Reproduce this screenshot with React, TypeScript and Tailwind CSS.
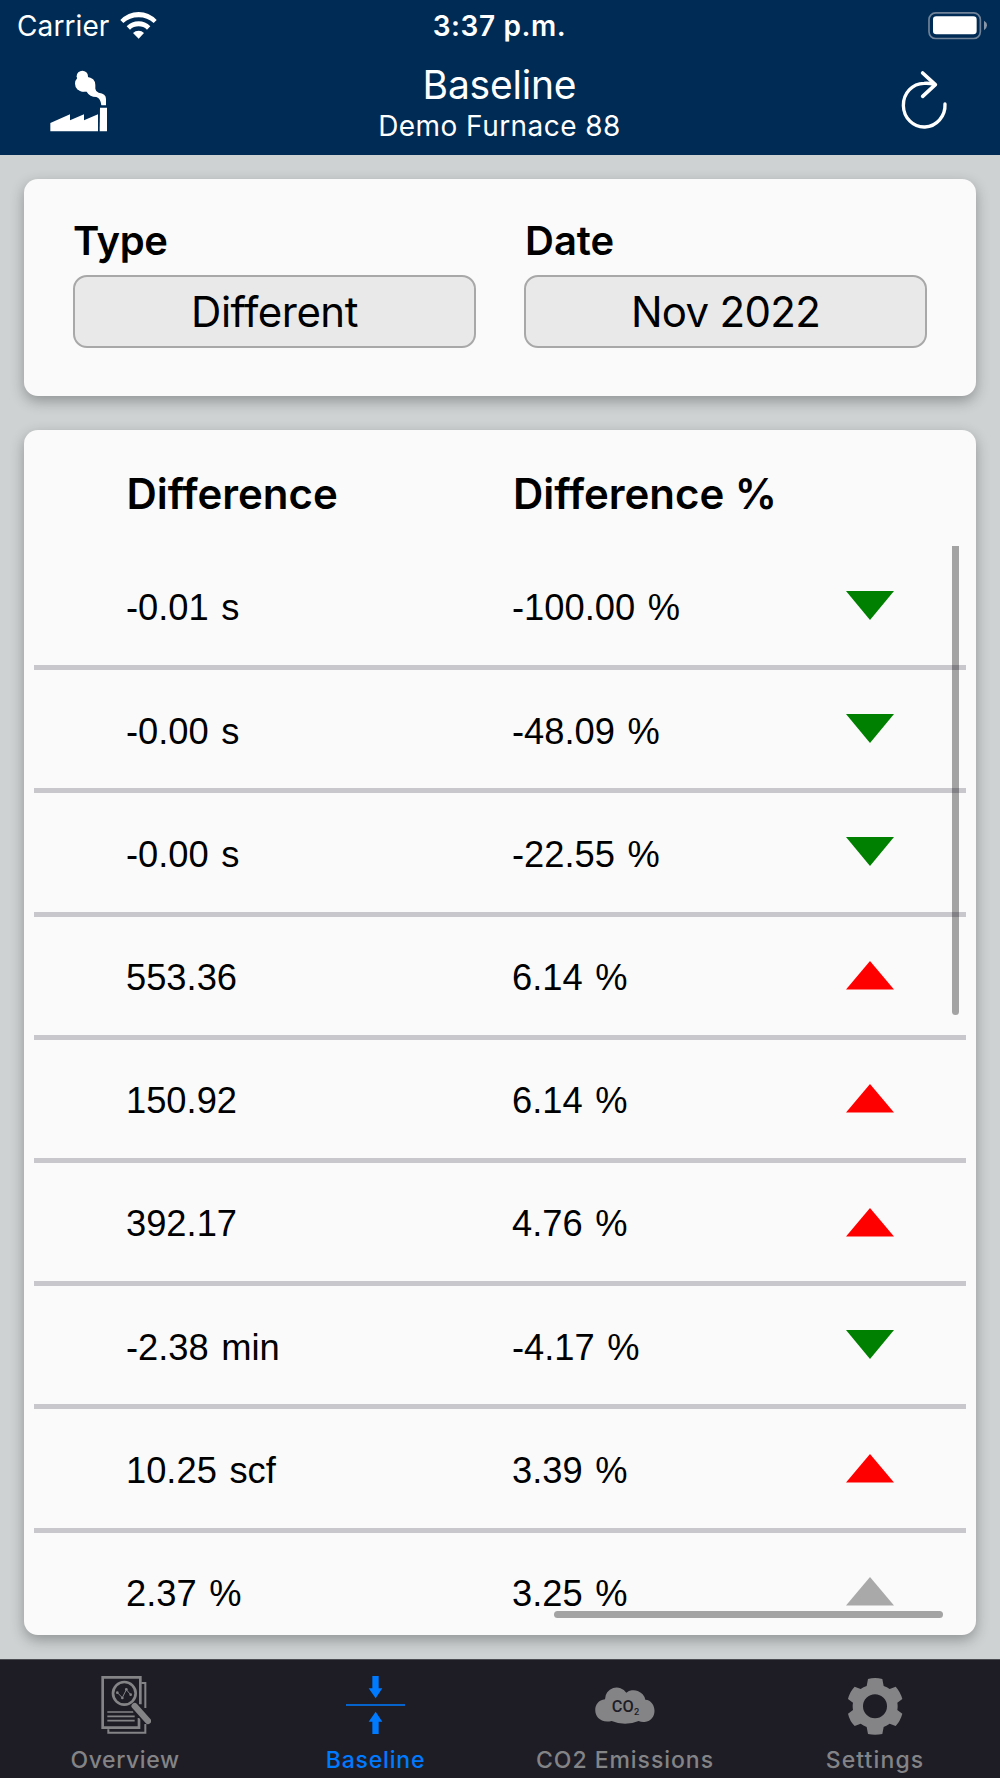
const rows = [
    { difference: "-0.01 s", percent: "-100.00 %", trend: "down" },
    { difference: "-0.00 s", percent: "-48.09 %", trend: "down" },
    { difference: "-0.00 s", percent: "-22.55 %", trend: "down" },
    { difference: "553.36", percent: "6.14 %", trend: "up" },
    { difference: "150.92", percent: "6.14 %", trend: "up" },
    { difference: "392.17", percent: "4.76 %", trend: "up" },
    { difference: "-2.38 min", percent: "-4.17 %", trend: "down" },
    { difference: "10.25 scf", percent: "3.39 %", trend: "up" },
    { difference: "2.37 %", percent: "3.25 %", trend: "neutral" },
];

function WifiIcon() {
    return (
        <svg className="w-[37px] h-[28px]" viewBox="0 0 111 84" fill="white">
            <path d="M1 24 Q24 0 56 0 Q87 0 110 24 L101 33 Q82 16 56 16 Q29 16 10 33 Z" />
            <path d="M20 43 Q35 28 56 28 Q76 28 91 43 L81 53 Q70 43 56 43 Q41 43 30 53 Z" />
            <path d="M39 63 Q46 56 56 56 Q65 56 72 63 L56 80 Z" />
        </svg>
    );
}

function BatteryIcon() {
    return (
        <svg className="w-[60px] h-[28px]" viewBox="0 0 180 84" fill="none">
            <rect x="6" y="2.5" width="154" height="77" rx="20" stroke="#718399" strokeWidth="5" />
            <rect x="18" y="13" width="131" height="54" rx="10" fill="white" />
            <path d="M171 26 Q180 31 180 40 Q180 49 171 55 Z" fill="#8796a8" />
        </svg>
    );
}

function FactoryIcon() {
    return (
        <svg className="w-[58px] h-[62px]" viewBox="0 0 174 186" fill="white">
            <path d="M1 184 V159 L60 133 V151 L102 133 V151 L144 133 V184 Z" />
            <path d="M150 113 H171 V184 H149 Z" />
            <circle cx="97" cy="19" r="17" />
            <circle cx="99" cy="41" r="24" />
            <path d="M110 20 Q136 23 136 45 L136 56 Q137 65 146 68 Q168 70 168 87 V106 H154 Q152 85 139 81 Q119 81 110 65 L92 64 Z" />
        </svg>
    );
}

function RefreshIcon() {
    return (
        <svg
            className="w-[50px] h-[60px]"
            viewBox="0 0 150 180"
            fill="none"
            stroke="white"
            strokeWidth="10"
            strokeLinecap="round"
            strokeLinejoin="round"
        >
            <path d="M138 102 A62.5 65.5 0 1 1 75 40 Q93 39 104 43" />
            <path d="M71 9 L109 44 L71 79" strokeWidth="11" />
        </svg>
    );
}

function OverviewIcon() {
    return (
        <svg className="w-[52px] h-[60px]" viewBox="119 75 156 180" fill="none" stroke="#848486">
            <path d="M243 163 V82 H130 V233 H239 V204" strokeWidth="8" />
            <path d="M246 99 H258 V174 M258 222 V248 H147 V238" strokeWidth="6" />
            <path d="M144 186 H222 M144 199 H226 M144 212 H226" strokeWidth="5" />
            <circle cx="195" cy="130" r="34" strokeWidth="8" fill="#1e1d26" />
            <path d="M174 128 L189 143 L201 119 L214 134" strokeWidth="3" />
            <g fill="#848486" stroke="none">
                <circle cx="174" cy="128" r="4" />
                <circle cx="189" cy="144" r="4" />
                <circle cx="201" cy="118" r="4" />
                <circle cx="214" cy="134" r="4" />
            </g>
            <path d="M226 169 L266 214" stroke="#1e1d26" strokeWidth="27" />
            <path d="M226 168 L266 213" strokeWidth="19" strokeLinecap="round" />
        </svg>
    );
}

function BaselineIcon() {
    return (
        <svg className="w-[60px] h-[60px]" viewBox="135 75 180 180" fill="#007aff">
            <path d="M217 78 H236 V115 H247 L227 145 L206 115 H217 Z" />
            <path d="M217 252 H236 V215 H247 L227 185 L206 215 H217 Z" />
            <rect x="138" y="162" width="177" height="6" fill="#0663cb" />
        </svg>
    );
}

function CloudIcon() {
    return (
        <svg className="w-[60px] h-[60px]" viewBox="225 75 180 180" fill="#848486">
            <path d="M255 148 A35 35 0 0 1 319 128 A36 36 0 0 1 376 149 C411 151 415 212 374 216 Q364 217 356 213 Q315 230 275 213 C217 226 210 152 255 148 Z" />
            <text
                x="275"
                y="186"
                fontFamily="Roboto, sans-serif"
                fontSize="51"
                fontWeight="500"
                fill="#1e1d26"
                textLength="67"
                lengthAdjust="spacingAndGlyphs"
            >
                CO
            </text>
            <text x="342" y="194" fontFamily="Roboto, sans-serif" fontSize="28" fontWeight="500" fill="#1e1d26">
                2
            </text>
        </svg>
    );
}

function SettingsIcon() {
    return (
        <svg className="w-[60px] h-[60px]" viewBox="195 75 180 180" fill="#848486">
            <path
                fillRule="evenodd"
                d="M264 87 Q285 81 307 87 L311 108 Q321 111 329 117 L347 110 Q361 125 367 147 L352 158 Q354 169 352 180 L367 191 Q361 213 347 228 L329 221 Q321 227 311 231 L307 252 Q285 257 264 252 L260 231 Q250 227 242 221 L224 228 Q209 213 204 191 L219 180 Q217 169 219 158 L204 147 Q209 125 224 110 L242 117 Q250 111 260 108 Z M285 133 A36 36 0 1 0 285 205 A36 36 0 1 0 285 133 Z"
            />
        </svg>
    );
}

function TrendIcon({ trend }: { trend: string }) {
    if (trend === "down") {
        return (
            <svg className="w-12 h-[29px] mb-px" viewBox="0 0 48 29">
                <path d="M0 0 H48 L24 29 Z" fill="#008000" />
            </svg>
        );
    }
    return (
        <svg className="w-12 h-[29px]" viewBox="0 0 48 29">
            <path d="M0 28.5 H48 L24 0 Z" fill={trend === "up" ? "#ff0000" : "#a9a9a9"} />
        </svg>
    );
}

export default function App() {
    return (
        <div className="w-[1000px] h-[1778px] flex flex-col bg-[#ced2d3] font-[Inter,sans-serif] text-black overflow-hidden">
            <header className="h-[155px] shrink-0 bg-[#002b54] text-white">
                <div className="h-[51px] grid grid-cols-3 items-center pl-[17px] pr-[13px]">
                    <div className="flex items-center gap-[11px]">
                        <span className="text-[28px] leading-[50px] tracking-[0.1px]">Carrier</span>
                        <WifiIcon />
                    </div>
                    <div className="text-center text-[28px] leading-[50px] font-semibold tracking-[0.6px] -ml-[5px]">
                        3:37 p.m.
                    </div>
                    <div className="flex justify-end">
                        <BatteryIcon />
                    </div>
                </div>
                <div className="h-[104px] flex justify-between pl-[50px] pr-[51px]">
                    <div className="w-[140px] pt-[19px]">
                        <FactoryIcon />
                    </div>
                    <div className="text-center pt-[10px]">
                        <h1 className="text-[39px] leading-[48px] tracking-[-0.2px]">Baseline</h1>
                        <p className="text-[28px] leading-[34px] tracking-[0.45px]">Demo Furnace 88</p>
                    </div>
                    <div className="w-[140px] pt-[19px] flex justify-end">
                        <RefreshIcon />
                    </div>
                </div>
            </header>

            <main className="flex-1 px-6 pt-6 flex flex-col gap-[34px]">
                <section className="h-[217px] rounded-[14px] bg-[#fafafa] shadow-[0_5px_14px_rgba(0,0,0,0.3)] px-[49px] pt-[37px] grid grid-cols-2 gap-[48px]">
                    <div>
                        <h2 className="text-[40px] leading-[50px] font-semibold tracking-[-0.4px]">Type</h2>
                        <button className="mt-[9px] w-full h-[73px] rounded-[14px] border-2 border-[#a8a8a8] bg-[#e9e9e9] text-[42px] leading-[69px] tracking-[-0.5px]">
                            Different
                        </button>
                    </div>
                    <div>
                        <h2 className="text-[40px] leading-[50px] font-semibold pl-px">Date</h2>
                        <button className="mt-[9px] w-full h-[73px] rounded-[14px] border-2 border-[#a8a8a8] bg-[#e9e9e9] text-[42px] leading-[69px] tracking-[-0.7px]">
                            Nov 2022
                        </button>
                    </div>
                </section>

                <section className="relative h-[1205px] rounded-[14px] bg-[#fafafa] shadow-[0_5px_14px_rgba(0,0,0,0.3)] px-[10px] flex flex-col">
                    <div className="h-[117px] shrink-0 flex pl-[92.5px] pt-[39px] text-[42px] leading-[50px] font-semibold tracking-[-0.05px]">
                        <h2 className="w-[386.5px]">Difference</h2>
                        <h2>Difference %</h2>
                    </div>
                    <div className="flex-1 min-h-0 overflow-hidden font-['Liberation_Sans',Arial,sans-serif] text-[36.3px] [word-spacing:2.5px]">
                        {rows.map((row, i) => (
                            <div
                                key={i}
                                className="h-[123.2px] flex items-center border-b-5 border-[#c8c7cc] pl-[92px]"
                            >
                                <div className="w-[386px] pt-[5px]">{row.difference}</div>
                                <div className="w-[334px] pt-[5px]">{row.percent}</div>
                                <TrendIcon trend={row.trend} />
                            </div>
                        ))}
                    </div>
                    <div className="absolute left-[928px] top-[116px] w-[7px] h-[469px] rounded-b-full bg-black/35" />
                    <div className="absolute left-[530px] top-[1181px] w-[389px] h-[7px] rounded-full bg-black/35" />
                </section>
            </main>

            <nav className="h-[119px] shrink-0 bg-[#1e1d26] border-t border-[#4b4d53] grid grid-cols-4 text-[#848486] text-[23px] leading-[30px] font-medium tracking-[0.6px]">
                <div className="flex flex-col items-center pt-[15px] gap-[10px]">
                    <OverviewIcon />
                    <span>Overview</span>
                </div>
                <div className="flex flex-col items-center pt-[15px] gap-[10px] text-[#007aff]">
                    <BaselineIcon />
                    <span className="tracking-[0.8px] pl-px">Baseline</span>
                </div>
                <div className="flex flex-col items-center pt-[15px] gap-[10px]">
                    <CloudIcon />
                    <span className="tracking-[0.95px]">CO2 Emissions</span>
                </div>
                <div className="flex flex-col items-center pt-[15px] gap-[10px]">
                    <SettingsIcon />
                    <span className="tracking-[1.1px]">Settings</span>
                </div>
            </nav>
        </div>
    );
}
